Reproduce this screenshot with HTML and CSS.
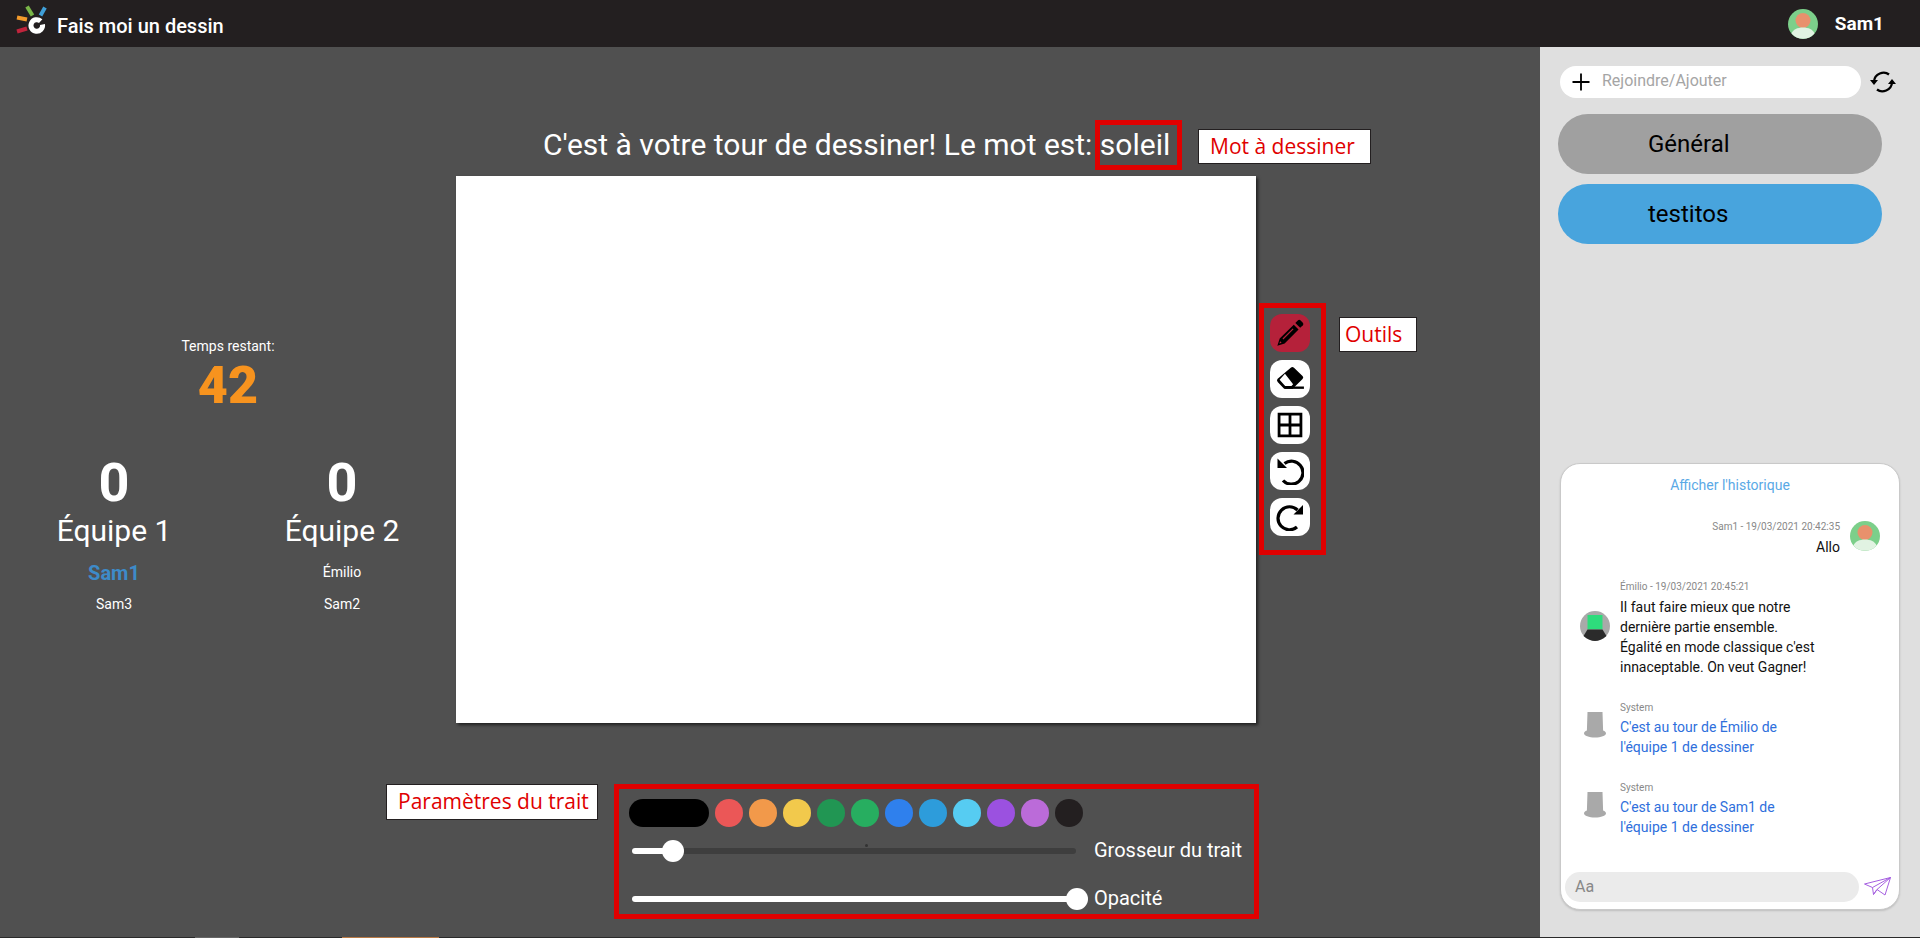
FILE: index.html
```html
<!DOCTYPE html>
<html lang="fr">
<head>
<meta charset="utf-8">
<title>Fais moi un dessin</title>
<link rel="stylesheet" href="styles.css">
</head>
<body>
<div class="app">
  <header class="topbar">
    <div class="brand">
      <svg class="logo" viewBox="0 0 40 40" width="40" height="40" fill="none" stroke-width="4">
        <path d="M12 2.500l5.500 9" stroke="#7ab648"/>
        <path d="M30 3.500l-4.500 8" stroke="#3f9fd8"/>
        <path d="M2 13.500l10 2" stroke="#f39a2b"/>
        <path d="M2 27.500l10-3" stroke="#c0243c"/>
        <path d="M25.700 17.200A5.800 5.800 0 1 0 27.500 20.500" stroke="#fff" stroke-width="5"/>
      </svg>
      <span class="brand-name">Fais moi un dessin</span>
    </div>
    <div class="user">
      <svg class="avatar-top" viewBox="0 0 30 30"><use href="#avatar-sam"/></svg>
      <span class="user-name">Sam1</span>
    </div>
  </header>

  <div class="content">
    <main class="stage">
      <h1 class="word-line">C'est à votre tour de dessiner! Le mot est: <span class="word">soleil</span></h1>

      <section class="scores">
        <div class="timer-label">Temps restant:</div>
        <div class="timer">42</div>
        <div class="teams">
          <div class="team">
            <div class="team-score">0</div>
            <div class="team-name">Équipe 1</div>
            <div class="player active">Sam1</div>
            <div class="player">Sam3</div>
          </div>
          <div class="team">
            <div class="team-score">0</div>
            <div class="team-name">Équipe 2</div>
            <div class="player first">Émilio</div>
            <div class="player">Sam2</div>
          </div>
        </div>
      </section>

      <div class="canvas"></div>

      <nav class="tools">
        <button class="tool selected"><svg viewBox="0 0 28 28" width="30" height="30"><path d="M21.500 2.200a1.600 1.600 0 0 1 2.200 0l2.300 2.300a1.600 1.600 0 0 1 0 2.200l-2.500 2.500-4.500-4.500z"/><path fill-rule="evenodd" d="M17.500 6.200l4.500 4.500L9 23.700l-6.800 2.300 2.200-6.800zM16.500 9.700L7 19.200l.8.8L17.300 10.500zM4.800 21.800l-.7 2.100 2.100-.7z"/></svg></button>
        <button class="tool"><svg viewBox="0 0 28 28" width="30" height="30"><path fill-rule="evenodd" d="M14.700 3.500a2.200 2.200 0 0 1 3 0l8 7.600a2.200 2.200 0 0 1 0 3L16.500 23H8.500L2.500 16.700a2.200 2.200 0 0 1 0-3zM9.300 9.200l-5 5.500 5.200 5.800h5.900l1.500-1.500z"/><path d="M9 21h18v2.200H9z"/></svg></button>
        <button class="tool"><svg viewBox="0 0 28 28" width="30" height="30" fill="none" stroke="#000" stroke-width="2.600"><path d="M3.800 3.800h20.400v20.400H3.800zM14 4v20M4 14h20"/></svg></button>
        <button class="tool"><svg viewBox="0 0 28 28" width="28" height="28"><path d="M8.500 6.500A11.500 11.500 0 1 1 7 23.500" fill="none" stroke="#000" stroke-width="3.200"/><path d="M1.500 1.500v9.500h9.500z"/></svg></button>
        <button class="tool"><svg viewBox="0 0 28 28" width="28" height="28"><path d="M21.500 7A11.500 11.500 0 1 0 21 24" fill="none" stroke="#000" stroke-width="3.200"/><path d="M27 2v9.500h-9.500z"/></svg></button>
      </nav>

      <section class="params">
        <div class="swatches">
          <span class="swatch pill"></span>
          <span class="swatch c-red"></span>
          <span class="swatch c-orange"></span>
          <span class="swatch c-yellow"></span>
          <span class="swatch c-dgreen"></span>
          <span class="swatch c-green"></span>
          <span class="swatch c-blue"></span>
          <span class="swatch c-sky"></span>
          <span class="swatch c-cyan"></span>
          <span class="swatch c-purple"></span>
          <span class="swatch c-mauve"></span>
          <span class="swatch c-dark"></span>
        </div>
        <div class="slider-row size-row">
          <div class="track"><div class="fill" style="width:41px"></div><span class="tick"></span><span class="thumb" style="left:30px"></span></div>
          <span class="slider-label">Grosseur du trait</span>
        </div>
        <div class="slider-row opacity-row">
          <div class="track"><div class="fill" style="width:100%"></div><span class="thumb" style="left:434px"></span></div>
          <span class="slider-label">Opacité</span>
        </div>
      </section>

      <div class="note note-word">Mot à dessiner</div>
      <div class="note note-tools">Outils</div>
      <div class="note note-params">Paramètres du trait</div>
    </main>

    <aside class="sidebar">
      <div class="search-row">
        <div class="search">
          <svg viewBox="0 0 20 20" width="20" height="20"><path d="M10 1.500v17M1.500 10h17" stroke="#000" stroke-width="1.800" fill="none"/></svg>
          <span>Rejoindre/Ajouter</span>
        </div>
        <svg class="refresh" viewBox="0 0 28 24" width="28" height="24" fill="none" stroke="#000" stroke-width="2.300"><path d="M5 11.500C5.500 3.500 15 0.500 20 4.500"/><path d="M23 12.500C22.500 20.500 13 23.500 8 19.500"/><path d="M1 10h8l-4 5zM19 14h8l-4-5z" fill="#000" stroke="none"/></svg>
      </div>
      <div class="room general">Général</div>
      <div class="room testitos">testitos</div>

      <section class="chat">
        <div class="history">Afficher l'historique</div>
        <div class="messages">
          <div class="msg mine">
            <svg class="avatar" viewBox="0 0 30 30"><use href="#avatar-sam"/></svg>
            <div class="msg-body">
              <div class="meta">Sam1 - 19/03/2021 20:42:35</div>
              <div class="text">Allo</div>
            </div>
          </div>
          <div class="msg">
            <svg class="avatar" viewBox="0 0 30 30"><circle cx="15" cy="15" r="15" fill="#a9a9a9"/><path d="M7.500 4h15v14.300h-15z" fill="#2edc7c"/><path d="M7.500 18.500h15l4 6.500C22.500 28.500 18.500 30 15 30s-7.500-1.500-11.500-5z" fill="#2b2b2b"/></svg>
            <div class="msg-body">
              <div class="meta">Émilio - 19/03/2021 20:45:21</div>
              <div class="text">Il faut faire mieux que notre<br>dernière partie ensemble.<br>Égalité en mode classique c'est<br>innaceptable. On veut Gagner!</div>
            </div>
          </div>
          <div class="msg system">
            <svg class="avatar" viewBox="0 0 30 30"><use href="#hat"/></svg>
            <div class="msg-body">
              <div class="meta">System</div>
              <div class="text">C'est au tour de Émilio de<br>l'équipe 1 de dessiner</div>
            </div>
          </div>
          <div class="msg system">
            <svg class="avatar" viewBox="0 0 30 30"><use href="#hat"/></svg>
            <div class="msg-body">
              <div class="meta">System</div>
              <div class="text">C'est au tour de Sam1 de<br>l'équipe 1 de dessiner</div>
            </div>
          </div>
        </div>
        <div class="composer">
          <div class="composer-input">Aa</div>
          <svg class="send" viewBox="0 0 27 20" width="27" height="20" fill="none" stroke="#a55fe0" stroke-width="1"><path d="M0.500 7L26.500 0.500 21 18 13 12.500 9.500 17.500 8.500 10.500zM26.500 0.500L8.500 10.500M26.500 0.500L13 12.500 9.500 17.500"/></svg>
        </div>
      </section>
    </aside>
  </div>

  <div class="bottom-strip"><span class="strip-gray"></span><span class="strip-orange"></span></div>
</div>

<svg class="defs" width="0" height="0">
  <defs>
    <g id="avatar-sam">
      <circle cx="15" cy="15" r="15" fill="#7ccf8a"/>
      <circle cx="15" cy="11.500" r="7.500" fill="#e8916c"/>
      <path d="M3.500 24.500C5 20.500 9.500 18.500 15 18.500s10 2 11.500 6A15 15 0 0 1 3.500 24.500z" fill="#e1f3e2"/>
    </g>
    <g id="hat">
      <path d="M7.500 1h15l.6 18.500c1.800.7 2.900 1.800 2.900 3 0 2-5 4-11 4s-11-2-11-4c0-1.200 1.100-2.300 2.900-3z" fill="#a9a9a9"/>
    </g>
  </defs>
</svg>
</body>
</html>
```
FILE: styles.css
```css
* { box-sizing: border-box; }
html, body { margin: 0; height: 100%; }
body { font-family: Roboto, "Liberation Sans", sans-serif; color: #fff; background: #505050; overflow: hidden; }
.defs { position: absolute; }

.app { height: 938px; display: flex; flex-direction: column; }

.topbar { height: 47px; flex: none; background: #231f20; display: flex; justify-content: space-between; align-items: center; }
.brand { display: flex; align-items: center; padding-left: 15px; }
.logo { margin-right: 2px; }
.brand-name { font-size: 20px; font-weight: 500; position: relative; top: 2px; }
.user { display: flex; align-items: center; padding-right: 36px; }
.avatar-top { width: 30px; height: 30px; margin-right: 17px; }
.user-name { font-size: 19px; font-weight: 700; }

.content { flex: 1; display: flex; min-height: 0; }

.stage { position: relative; width: 1540px; flex: none; display: grid; grid-template-columns: 456px 800px 1fr; grid-template-rows: 129px 547px 1fr; }

.word-line { grid-column: 2 / 4; grid-row: 1; align-self: end; margin: 0 0 6px 87px; font-size: 30px; font-weight: 400; line-height: 40px; white-space: nowrap; }
.word { display: inline-block; border: 5px solid #e00000; padding-right: 7px; line-height: 40px; margin-left: -5px; }

.scores { grid-column: 1; grid-row: 2; text-align: center; padding-top: 161px; }
.timer-label { font-size: 14px; line-height: 18px; }
.timer { font-size: 52px; font-weight: 900; line-height: 56px; color: #f7931e; margin-top: 3px; }
.teams { display: grid; grid-template-columns: 228px 228px; margin-top: 39px; }
.team-score { font-size: 54px; font-weight: 700; line-height: 59px; }
.team-name { font-size: 30px; line-height: 36px; margin-top: 1px; }
.player { font-size: 14px; line-height: 32px; }
.player.active { font-size: 20px; font-weight: 700; color: #3d8bc9; margin-top: 9px; line-height: 30px; }
.player.first { margin-top: 7px; }

.canvas { grid-column: 2; grid-row: 2; background: #fff; box-shadow: 2px 2px 3px rgba(0,0,0,.6); }

.tools { grid-column: 3; grid-row: 2; align-self: start; justify-self: start; margin: 127px 0 0 3px; width: 67px; height: 252px; border: 5px solid #e00000; padding: 6px 6px; display: flex; flex-direction: column; gap: 8px; }
.tool { width: 40px; height: 38px; border: 0; padding: 0; border-radius: 12px; background: #fff; display: flex; align-items: center; justify-content: center; }
.tool.selected { background: #b5213a; }

.params { grid-column: 2 / 4; grid-row: 3; justify-self: start; margin: 61px 0 0 158px; width: 645px; height: 135px; border: 5px solid #e00000; padding: 10px 0 0 10px; }
.swatches { display: flex; gap: 6px; }
.swatch { width: 28px; height: 28px; border-radius: 14px; flex: none; }
.pill { width: 80px; background: #000; }
.c-red { background: #eb5757; }
.c-orange { background: #f2994a; }
.c-yellow { background: #f2c94c; }
.c-dgreen { background: #219653; }
.c-green { background: #27ae60; }
.c-blue { background: #2f80ed; }
.c-sky { background: #2d9cdb; }
.c-cyan { background: #56ccf2; }
.c-purple { background: #9b51e0; }
.c-mauve { background: #bb6bd9; }
.c-dark { background: #231f20; }

.slider-row { display: flex; align-items: center; height: 22px; padding-left: 3px; gap: 18px; }
.size-row { margin-top: 13px; }
.opacity-row { margin-top: 26px; }
.track { position: relative; width: 444px; height: 6px; border-radius: 3px; background: #3e3e3e; flex: none; }
.fill { height: 6px; border-radius: 3px; background: #fff; }
.thumb { position: absolute; top: -8px; width: 22px; height: 22px; border-radius: 50%; background: #fff; }
.tick { position: absolute; left: 233px; top: -4px; width: 3px; height: 3px; border-radius: 50%; background: #333; }
.slider-label { font-size: 20px; line-height: 22px; position: relative; top: -1px; white-space: nowrap; }

.note { position: absolute; background: #fff; border: 1px solid #231f20; color: #e00000; font-family: "Open Sans", sans-serif; font-size: 21px; line-height: 32px; padding-left: 11px; white-space: nowrap; }
.note-word { left: 1198px; top: 82px; width: 173px; height: 35px; }
.note-tools { left: 1339px; top: 270px; width: 78px; height: 35px; padding-left: 5px; }
.note-params { left: 386px; top: 737px; width: 212px; height: 36px; }

.sidebar { flex: 1; background: #dfdfdf; display: flex; flex-direction: column; padding: 19px 0 27px 20px; color: #000; }
.search-row { display: flex; align-items: center; gap: 8px; }
.search { width: 301px; height: 32px; border-radius: 16px; background: #fff; display: flex; align-items: center; padding-left: 11px; gap: 11px; font-size: 16px; color: #a5a5a5; }
.search span { position: relative; top: -2px; }
.refresh { flex: none; }
.room { width: 324px; height: 60px; margin-left: -2px; border-radius: 30px; font-size: 24px; line-height: 60px; padding-left: 90px; }
.general { background: #a0a0a0; margin-top: 16px; }
.testitos { background: #48a4dd; margin-top: 10px; }

.chat { margin-top: auto; width: 340px; height: 447px; background: #fff; border: 1px solid #c9c9c9; border-radius: 20px; box-shadow: 0 1px 2px rgba(0,0,0,.15); display: flex; flex-direction: column; padding: 10px 19px 7px; position: relative; }
.history { font-size: 14px; line-height: 22px; text-align: center; color: #5aa9e6; }
.messages { display: flex; flex-direction: column; gap: 23px; margin-top: 24px; }
.msg { display: flex; gap: 10px; }
.msg.mine { flex-direction: row-reverse; text-align: right; }
.avatar { width: 30px; height: 30px; flex: none; align-self: center; margin-bottom: 6px; }
.meta { font-size: 10px; line-height: 14px; color: #888; margin-bottom: 3px; }
.system .meta { line-height: 16px; margin-bottom: 1px; }
.text { font-size: 14px; line-height: 20px; color: #111; }
.system .text { color: #2f6fdc; }
.composer { margin: auto -15px 0; display: flex; align-items: center; gap: 5px; }
.composer-input { width: 294px; height: 30px; border-radius: 15px; background: #ebebeb; font-size: 16px; line-height: 30px; padding-left: 10px; color: #888; }
.send { flex: none; }

.bottom-strip { height: 1px; flex: none; background: #2a2a2a; position: relative; }
.strip-gray { position: absolute; left: 195px; width: 44px; height: 1px; background: #666; }
.strip-orange { position: absolute; left: 342px; width: 97px; height: 1px; background: #b97a45; }
```
